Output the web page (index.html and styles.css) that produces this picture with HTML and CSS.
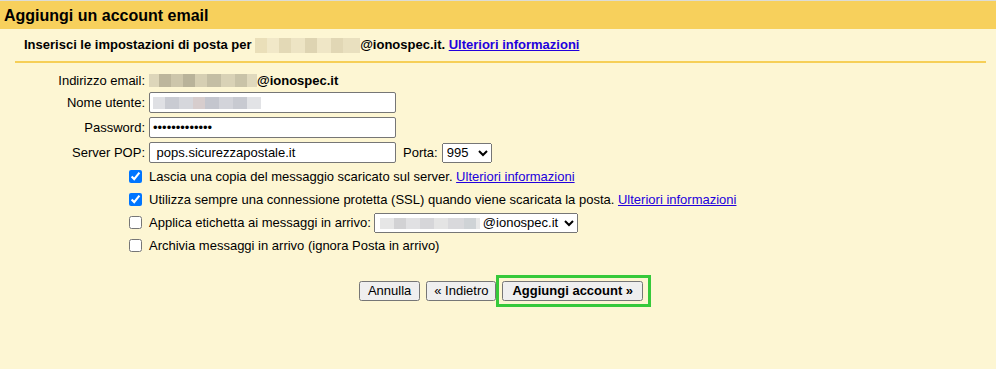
FILE: index.html
```html
<!DOCTYPE html>
<html>
<head>
    <title>Aggiungi un account email</title>
    <link rel="stylesheet" href="styles.css">
</head>
<body>
    <div class="topbar">Aggiungi un account email</div>

    <div class="intro">
        Inserisci le impostazioni di posta per <span class="redact redact-intro"></span>@ionospec.it. <a href="#">Ulteriori informazioni</a>
    </div>

    <form class="fields" onsubmit="return false">
        <label class="field-label">Indirizzo email:</label>
        <div class="field-value"><span class="redact redact-email"></span><b>@ionospec.it</b></div>

        <label class="field-label" for="username">Nome utente:</label>
        <div class="field-value">
            <span class="masked">
                <input type="text" id="username" class="text-input">
                <span class="redact redact-user"></span>
            </span>
        </div>

        <label class="field-label" for="password">Password:</label>
        <div class="field-value">
            <input type="password" id="password" class="text-input" value="abcdefghijklm">
        </div>

        <label class="field-label" for="server">Server POP:</label>
        <div class="field-value server-row">
            <input type="text" id="server" class="text-input" value=" pops.sicurezzapostale.it">
            <label for="port">Porta:</label>
            <select id="port" class="port-select">
                <option>995</option>
                <option>110</option>
            </select>
        </div>
    </form>

    <div class="options">
        <label class="option"><input type="checkbox" checked>Lascia una copia del messaggio scaricato sul server.&nbsp;<a href="#">Ulteriori informazioni</a></label>
        <label class="option"><input type="checkbox" checked>Utilizza sempre una connessione protetta (SSL) quando viene scaricata la posta.&nbsp;<a href="#">Ulteriori informazioni</a></label>
        <div class="option">
            <input type="checkbox" id="apply-label">
            <label for="apply-label">Applica etichetta ai messaggi in arrivo:</label>
            <span class="masked">
                <select class="label-select">
                    <option>@ionospec.it</option>
                </select>
                <span class="redact redact-label"></span>
            </span>
        </div>
        <label class="option"><input type="checkbox">Archivia messaggi in arrivo (ignora Posta in arrivo)</label>
    </div>

    <div class="actions">
        <button type="button">Annulla</button>
        <button type="button" class="back">&laquo; Indietro</button>
        <span class="highlight"><button type="submit" class="primary">Aggiungi account &raquo;</button></span>
    </div>
</body>
</html>
```

FILE: styles.css
```css
body {
    margin: 0;
    font-family: "Liberation Sans", Arial, sans-serif;
    font-size: 13px;
    color: #000;
    background: #fdf6d3;
    border-top: 1px solid #dcdcd6;
    min-height: 368px;
}
a { color: #2200dd; }

.topbar {
    background: #f7d05c;
    height: 28px;
    line-height: 29px;
    padding-left: 4px;
    font-size: 16px;
    font-weight: bold;
}

.intro {
    margin: 0 10px 0 15px;
    padding: 8px 0 8px 9px;
    line-height: 16px;
    font-weight: bold;
    border-bottom: 2px solid #f6cf57;
}

.redact {
    display: inline-block;
    vertical-align: middle;
}
.redact-intro {
    width: 105px;
    height: 15px;
    background: linear-gradient(90deg,
        #eadfb9 0 12px, #f1e8c8 12px 24px, #e3d9b6 24px 36px, #ede4c4 36px 50px,
        #ded4b2 50px 62px, #efe6c6 62px 76px, #e1d7b5 76px 88px, #e9e0bf 88px 105px);
}
.redact-email {
    width: 108px;
    height: 13px;
    background: linear-gradient(90deg,
        #ddd6ba 0 10px, #bdb69c 10px 22px, #cdc6ab 22px 34px, #b9b39a 34px 46px,
        #d6cfb3 46px 58px, #c4bea4 58px 72px, #d9d2b6 72px 86px, #c9c3a8 86px 98px, #e0d9bd 98px 108px);
}
.redact-user {
    position: absolute;
    left: 4px;
    top: 5px;
    width: 108px;
    height: 12px;
    background: linear-gradient(90deg,
        #dfe0e4 0 12px, #c9cbd2 12px 26px, #d6d7dc 26px 40px, #d7cdcd 40px 52px,
        #c4c6ce 52px 66px, #d3d4da 66px 80px, #c8cad1 80px 94px, #e2e3e6 94px 108px);
}
.redact-label {
    position: absolute;
    left: 6px;
    top: 5px;
    width: 100px;
    height: 11px;
    background: linear-gradient(90deg,
        #e6e6e6 0 14px, #d2d2d4 14px 26px, #e1e1e3 26px 40px, #d6d6d9 40px 54px,
        #e4e4e4 54px 68px, #d9d9dc 68px 84px, #cfd3d6 84px 96px, #e8e8e8 96px 100px);
}

.fields {
    display: grid;
    grid-template-columns: 146px auto;
    column-gap: 3px;
    row-gap: 4px;
    align-items: center;
    margin: 0;
    padding-top: 10px;
}
.field-label {
    text-align: right;
    padding-right: 1px;
    line-height: 15px;
}
.field-value {
    display: flex;
    align-items: center;
    line-height: 15px;
}
.server-row { gap: 7px; }
.server-row .port-select { margin-left: -3px; }

.masked {
    position: relative;
    display: inline-block;
}

input, select, button {
    font-family: "Liberation Sans", Arial, sans-serif;
    font-size: 13px;
}
.text-input {
    display: block;
    width: 247px;
    height: 21px;
    box-sizing: border-box;
    margin: 0;
    padding: 1px 3px;
    border: 1px solid #767676;
    border-radius: 2px;
    background: #fff;
}
.port-select {
    width: 50px;
    height: 20px;
    margin: 0;
}
.label-select {
    display: block;
    width: 204px;
    height: 20px;
    margin: 0;
    padding-left: 104px;
}

.options {
    padding: 2px 0 0 129px;
}
.option {
    display: flex;
    align-items: center;
    height: 23px;
    white-space: nowrap;
}
.option input[type="checkbox"] {
    width: 13px;
    height: 13px;
    margin: 0 7px 0 0;
}
.option .masked { margin-left: 3px; }

.actions {
    display: flex;
    justify-content: center;
    gap: 6px;
    margin-top: 24px;
    padding-left: 6px;
}
.actions button {
    height: 20px;
    padding: 0 7px;
    margin: 0;
    line-height: 16px;
}
.actions .back { padding: 0 6px; }
.actions .primary {
    font-weight: bold;
    padding: 0 8px;
}
.highlight {
    position: relative;
    display: inline-block;
}
.highlight::after {
    content: "";
    position: absolute;
    top: -6px;
    bottom: -6px;
    left: -6px;
    right: -8px;
    border: 3px solid #36c93a;
    pointer-events: none;
}
```
